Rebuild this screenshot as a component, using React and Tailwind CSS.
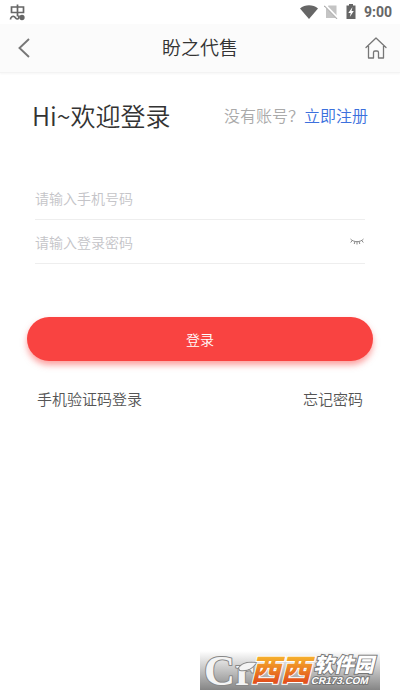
import { useState } from 'react'

const StatusBar = () => (
  <div className="flex h-6 items-center justify-between px-2 text-[#666]">
    <svg viewBox="0 0 18 18" className="h-[18px] w-[18px]" fill="none" stroke="currentColor" strokeWidth="1.7">
      <path d="M3.5 4h12v5.500h-12zM9.500 1.500v12M2.500 16.500c0-2.500 2-3.500 3.500-3 1.500.5 1.500 2.500 3.500 2.500 1.500 0 1.500-2 1.500-3.500" />
      <circle cx="14" cy="14.500" r="1.800" fill="currentColor" />
    </svg>
    <div className="flex items-center">
      <svg viewBox="0 0 18 14" className="h-[14px] w-[18px]" fill="currentColor">
        <path d="M0 3.500C5-.7 13-.7 18 3.500L9 14z" />
      </svg>
      <svg viewBox="0 0 14 14" className="ml-1.5 h-[14px] w-[14px]">
        <path d="M4.500.5H12.500V13H2V3z" fill="#c4c4c4" />
        <path d="M1 0 14 13.500" stroke="#fff" strokeWidth="2.500" />
        <path d="M.3.800 13 13.800" stroke="#b0b0b0" strokeWidth="1.200" />
      </svg>
      <svg viewBox="0 0 10 16" className="ml-2 h-4 w-[10px]">
        <path d="M3 0h4v1.500h2.500V15H.5V1.500H3z" fill="currentColor" />
        <path d="M6.500 3 2.300 9H4.700L3.800 13 7.800 7H5.500z" fill="#fff" />
      </svg>
      <span className="ml-2 font-[Roboto] text-sm font-bold">9:00</span>
    </div>
  </div>
)

const Header = () => (
  <header className="flex h-[49px] items-center justify-between border-b border-[#f3f3f3] bg-[#fbfbfb] px-3 shadow-[0_1px_2px_#f6f6f6]">
    <button type="button" aria-label="返回" className="flex w-6 justify-center text-[#777]">
      <svg viewBox="0 0 12 20" className="h-5 w-3" fill="none" stroke="currentColor" strokeWidth="1.900">
        <path d="M11 1 1.500 10 11 19" />
      </svg>
    </button>
    <h1 className="pb-0.5 text-[19px] leading-7 text-[#333]">盼之代售</h1>
    <button type="button" aria-label="首页" className="flex w-6 justify-center text-[#777]">
      <svg viewBox="0 0 22 22" className="h-[22px] w-[22px]" fill="none" stroke="currentColor" strokeWidth="1.300" strokeLinejoin="round" strokeLinecap="round">
        <path d="M1 10.500 11 1l10 9.500M3.500 9v12h5v-5.500c0-1 .5-1.500 1.500-1.500h2c1 0 1.500.5 1.500 1.500V21h5V9" />
      </svg>
    </button>
  </header>
)

const Watermark = () => (
  <svg
    viewBox="0 0 180 39"
    role="img"
    aria-label="西西软件园 CR173.COM"
    className="h-[39px] w-[180px] overflow-visible"
  >
    <defs>
      <linearGradient id="shade" x2="0" y2="1">
        <stop stopColor="#fff" />
        <stop offset="1" stopColor="#858585" />
      </linearGradient>
      <linearGradient id="orange" x2="0" y2="1">
        <stop offset=".25" stopColor="#f5ae2c" />
        <stop offset=".8" stopColor="#e2521c" />
      </linearGradient>
    </defs>
    <path d="M0 0h180v39H0z" fill="url(#shade)" />
    <g fill="#f4f4f4" stroke="#888" strokeWidth="2" strokeLinejoin="round" paintOrder="stroke">
      <text x="4" y="34" fontSize="43" fontWeight="bold" fontFamily="'Liberation Serif', serif">Cr</text>
      <path d="M39 17c3-5 9-6 17-5-4 5-8 8-16 7z" />
    </g>
    <g transform="skewX(-14)" fontFamily="'Noto Sans CJK SC', sans-serif" fontWeight="900" paintOrder="stroke" stroke="#fff" strokeWidth="2">
      <text x="58" y="30" fontSize="30" fill="url(#orange)">西西</text>
      <text x="119" y="21" fontSize="20" fill="#fff" stroke="#777">软件园</text>
      <text x="119" y="33" fontSize="10" fill="#fff" stroke="#777" fontFamily="'Liberation Sans', sans-serif">CR173.COM</text>
    </g>
  </svg>
)

const App = () => {
  const [visible, setVisible] = useState(false)

  return (
    <div className="flex min-h-[690px] flex-col bg-white font-['Noto_Sans_CJK_SC',sans-serif] font-[350]">
      <StatusBar />
      <Header />

      <main className="flex-1">
        <div className="flex items-center justify-between px-8 pt-[25px]">
          <h2 className="text-[25px] leading-[34px] text-[#333]">Hi~欢迎登录</h2>
          <p className="text-base text-[#aaa]">
            没有账号？<a href="#register" className="text-[#3c70dd]">立即注册</a>
          </p>
        </div>

        <form className="mt-11" onSubmit={(e) => e.preventDefault()}>
          <div className="mx-[35px]">
            <div className="flex h-11 items-center border-b border-[#eee]">
              <input
                type="tel"
                aria-label="手机号码"
                placeholder="请输入手机号码"
                className="min-w-0 flex-1 text-sm text-[#333] outline-none placeholder:text-[#c4c4c8]"
              />
            </div>
            <div className="flex h-11 items-center border-b border-[#eee]">
              <input
                type={visible ? 'text' : 'password'}
                aria-label="登录密码"
                placeholder="请输入登录密码"
                className="min-w-0 flex-1 text-sm text-[#333] outline-none placeholder:text-[#c4c4c8]"
              />
              <button
                type="button"
                aria-label="显示密码"
                onClick={() => setVisible(!visible)}
                className="px-px text-[#888]"
              >
                <svg viewBox="0 0 14 7" className="h-[7px] w-[14px]" fill="none" stroke="currentColor">
                  <path d="M.5 1c3 3.500 10 3.500 13 0M2.200 2.500.7 4.500M5 3.500 4.200 6M7 4v2.500M9 3.500 9.800 6M11.800 2.500l1.500 2" />
                </svg>
              </button>
            </div>
          </div>

          <div className="mt-[53px] px-[27px]">
            <button
              type="submit"
              className="h-11 w-full rounded-full bg-[#f94341] text-sm text-white shadow-[0_4px_6px_#f9434180]"
            >
              登录
            </button>
          </div>
        </form>

        <div className="mt-[27px] flex justify-between px-[37px] text-[15px] leading-[22px] text-[#555]">
          <a href="#sms">手机验证码登录</a>
          <a href="#forgot">忘记密码</a>
        </div>
      </main>

      <footer className="flex justify-end pr-5">
        <Watermark />
      </footer>
    </div>
  )
}

export default App
